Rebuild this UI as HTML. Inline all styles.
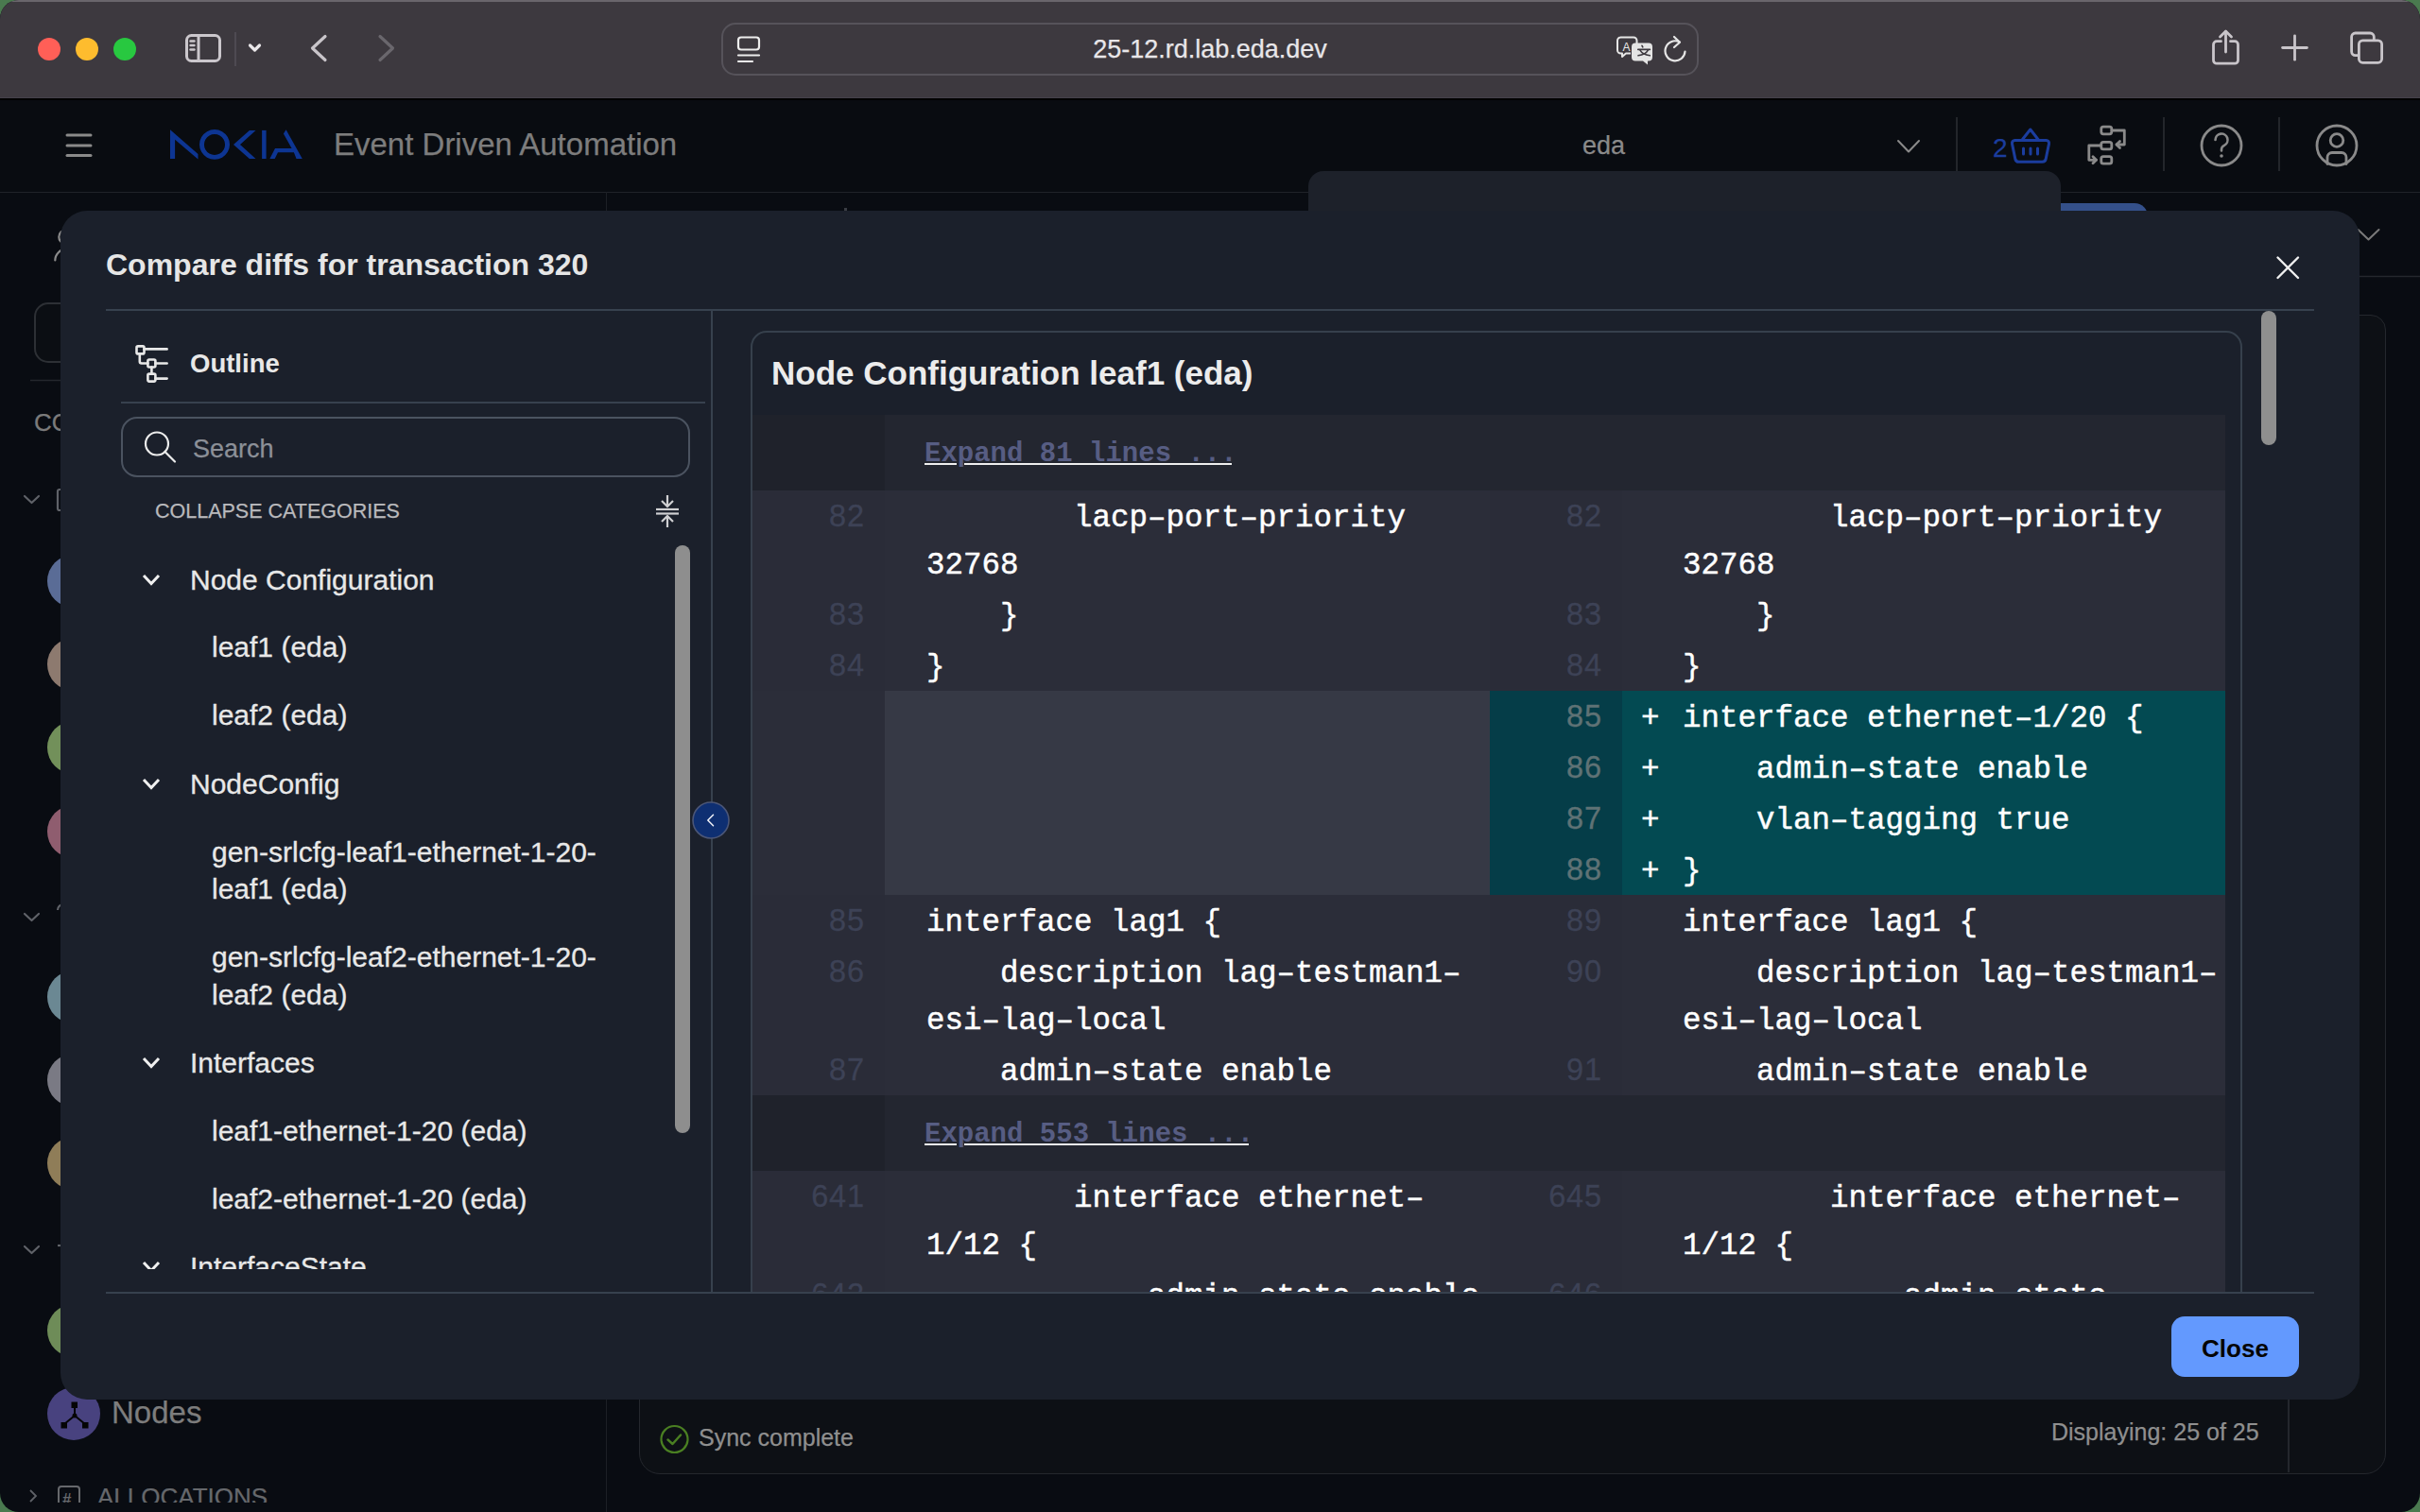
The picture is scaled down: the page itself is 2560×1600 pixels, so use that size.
<!DOCTYPE html>
<html><head><meta charset="utf-8">
<style>
*{box-sizing:border-box;margin:0;padding:0}
html,body{width:2560px;height:1600px;overflow:hidden;background:#4a7a4f;font-family:"Liberation Sans",sans-serif}
#win{position:absolute;left:0;top:0;width:2560px;height:1600px;border-radius:20px;overflow:hidden;background:#090c12}
</style></head><body>
<div id="win">
<div style="position:absolute;left:0px;top:0px;width:2560px;height:104px;background:#3d393f;"></div>
<div style="position:absolute;left:0px;top:0px;width:2560px;height:2px;background:#6a666c;"></div>
<div style="position:absolute;left:39.85px;top:39.85px;width:24.3px;height:24.3px;border-radius:50%;background:#ff5f57"></div>
<div style="position:absolute;left:79.85px;top:39.85px;width:24.3px;height:24.3px;border-radius:50%;background:#febc2e"></div>
<div style="position:absolute;left:119.85px;top:39.85px;width:24.3px;height:24.3px;border-radius:50%;background:#28c840"></div>
<svg style="position:absolute;left:0;top:0" width="2560" height="104">
<g fill="none" stroke="#cbc7cc" stroke-width="3" stroke-linecap="round" stroke-linejoin="round">
<rect x="197.5" y="37.5" width="35" height="27" rx="5"/>
<line x1="210" y1="38" x2="210" y2="64"/>
</g>
<g stroke="#cbc7cc" stroke-width="2.4" stroke-linecap="round"><line x1="201.5" y1="43.5" x2="205.5" y2="43.5"/><line x1="201.5" y1="48" x2="205.5" y2="48"/><line x1="201.5" y1="52.5" x2="205.5" y2="52.5"/></g>
<line x1="249" y1="34" x2="249" y2="70" stroke="#55515a" stroke-width="1.5"/>
<polyline points="264.5,48 269.5,53 274.5,48" fill="none" stroke="#eae7ea" stroke-width="3.2" stroke-linecap="round" stroke-linejoin="round"/>
<polyline points="344,38.5 330.5,51 344,63.5" fill="none" stroke="#c9c5ca" stroke-width="3.2" stroke-linecap="round" stroke-linejoin="round"/>
<polyline points="402,38.5 415.5,51 402,63.5" fill="none" stroke="#6a676d" stroke-width="3.2" stroke-linecap="round" stroke-linejoin="round"/>
<rect x="764" y="25" width="1032" height="54" rx="14" fill="none" stroke="#56535a" stroke-width="2"/>
<g fill="none" stroke="#ededed" stroke-width="2.2" stroke-linecap="round">
<rect x="781" y="39.5" width="22" height="13" rx="3"/>
<line x1="781" y1="58.5" x2="803" y2="58.5"/><line x1="781" y1="65" x2="796" y2="65"/>
</g>
<g fill="none" stroke="#e6e6e6" stroke-width="2" stroke-linejoin="round">
<path d="M1714 39.5 h14 a3.5 3.5 0 0 1 3.5 3.5 v10 M1711 43 a3.5 3.5 0 0 1 3.5-3.5 M1711 43 v10 a3.5 3.5 0 0 0 3.5 3.5 h1.5 v3.5 l4-3.5 h5"/>
<text x="1716.5" y="53.5" font-family="Liberation Sans" font-size="12" fill="#e6e6e6" stroke="none">A</text>
</g>
<path d="M1730 45.5 h14 a4 4 0 0 1 4 4 v11 a4 4 0 0 1 -4 4 h-1 v4 l-5 -4 h-8 a4 4 0 0 1 -4 -4 v-11 a4 4 0 0 1 4 -4z" fill="#e4e4e4"/>
<g fill="none" stroke="#3d393f" stroke-width="1.6" stroke-linecap="round"><path d="M1737 48.3 l0.8 1.6"/><path d="M1732.8 52.4 h12.6"/><path d="M1735 53.2 Q1737.5 57.8 1745.3 58.8"/><path d="M1743.3 53.2 Q1740.8 57.8 1733 58.8"/></g>
<g fill="none" stroke="#e6e6e6" stroke-width="2.2" stroke-linecap="round" stroke-linejoin="round">
<path d="M1782.5 54.5 a10.5 10.5 0 1 1 -6 -10.2"/>
<polyline points="1771,39 1777,44.7 1771,50"/>
</g>
<g fill="none" stroke="#c9c5ca" stroke-width="2.8" stroke-linecap="round" stroke-linejoin="round">
<path d="M2349.5 43.7 h-4.5 a3.5 3.5 0 0 0 -3.5 3.5 v16.5 a3.5 3.5 0 0 0 3.5 3.5 h19 a3.5 3.5 0 0 0 3.5 -3.5 v-16.5 a3.5 3.5 0 0 0 -3.5 -3.5 h-4.5"/>
<line x1="2354.5" y1="33.5" x2="2354.5" y2="55"/>
<polyline points="2348.5,39 2354.5,33 2360.5,39"/>
<line x1="2427.5" y1="37.8" x2="2427.5" y2="63.2"/><line x1="2414.6" y1="50.5" x2="2440.4" y2="50.5"/>
<rect x="2487.6" y="35" width="23.7" height="23.6" rx="4"/>
<rect x="2495.4" y="42.8" width="24.2" height="23.5" rx="4" fill="#3d393f"/>
</g>
</svg>
<div style='position:absolute;left:1280px;top:39.14px;font-family:"Liberation Sans",sans-serif;font-size:27px;line-height:27px;color:#e8e6e9;font-weight:400;white-space:pre;transform:translateX(-50%);-webkit-text-stroke:0.25px #e8e6e9'>25-12.rd.lab.eda.dev</div>
<div style="position:absolute;left:0px;top:104px;width:2560px;height:99px;background:#090c11;"></div>
<div style="position:absolute;left:0px;top:103px;width:2560px;height:1px;background:#45414a;"></div>
<div style="position:absolute;left:0px;top:104px;width:2560px;height:1.5px;background:#000000;"></div>
<div style="position:absolute;left:0px;top:202.5px;width:2560px;height:1.5px;background:#202329;"></div>
<svg style="position:absolute;left:0;top:104px" width="2560" height="99">
<g stroke="#8a8a8a" stroke-width="3" stroke-linecap="round"><line x1="71" y1="39" x2="96" y2="39"/><line x1="71" y1="50" x2="96" y2="50"/><line x1="71" y1="60.5" x2="96" y2="60.5"/></g>
<g fill="#0d3592" transform="translate(0,-104)">
<path d="M180 137.2 L209.5 163 V168.5 L185.1 147.8 V168 H180z"/>
<path d="M227 137 a16 15.9 0 1 0 0.01 0z M227 141.9 a11.05 11 0 1 1 -0.01 0z" fill-rule="evenodd"/>
<path d="M263.9 137.9 H270.5 L254 153.1 L270.5 168 H263.9 L247 153.1z"/>
<rect x="277.1" y="137.9" width="4.5" height="30.1"/>
<path d="M302.6 137.2 L319.8 168 H313.5 L310.9 161.2 H294 L290.7 168 H285.4 L291 157 H308.6 L299.9 141.5z"/>
</g>
<g fill="none" stroke="#8a8a8a" stroke-width="2" stroke-linecap="round" stroke-linejoin="round">
<polyline points="2008,45 2019,56.5 2030,45"/>
</g>
<g stroke="#2c2f34" stroke-width="1.5"><line x1="2070" y1="20" x2="2070" y2="77"/><line x1="2289" y1="20" x2="2289" y2="77"/><line x1="2411" y1="20" x2="2411" y2="77"/></g>
<g fill="none" stroke="#1b3d9e" stroke-width="3" stroke-linecap="round" stroke-linejoin="round" transform="translate(0,-104)">
<path d="M2131.5 148.5 h33 a3 3 0 0 1 3 3.6 l-3.3 16 a4 4 0 0 1 -4 3.2 h-24.4 a4 4 0 0 1 -4 -3.2 l-3.3 -16 a3 3 0 0 1 3 -3.6z"/>
<polyline points="2139.5,147.5 2147.8,137 2156,147.5"/>
<line x1="2140.5" y1="157" x2="2140.5" y2="163"/><line x1="2148" y1="157" x2="2148" y2="163"/><line x1="2155.5" y1="157" x2="2155.5" y2="163"/>
</g>
<g fill="none" stroke="#8a8a8a" stroke-width="2.8" stroke-linejoin="round" stroke-linecap="round">
<g transform="translate(0,-104)">
<rect x="2222.8" y="134.2" width="11" height="7.6" rx="2.2"/>
<rect x="2222.8" y="150.3" width="11" height="7.6" rx="2.2"/>
<rect x="2222.8" y="165.6" width="11" height="7.6" rx="2.2"/>
<polyline points="2234,138 2247.3,138 2247.3,153 2239,153"/><polyline points="2242.5,149.5 2239,153 2242.5,156.5"/>
<polyline points="2222.5,154 2209.8,154 2209.8,169.3 2217.5,169.3"/><polyline points="2214,165.8 2217.5,169.3 2214,172.8"/>
</g>
<circle cx="2350" cy="50" r="21"/>
<circle cx="2472" cy="50" r="21"/>
<circle cx="2472" cy="44.5" r="6.8"/>
<path d="M2462 69.5 v-7 a5 5 0 0 1 5 -5 h10 a5 5 0 0 1 5 5 v7"/>
</g>
<path d="M2343.5 44 a6.5 6.5 0 1 1 9.5 5.8 c-2.2 1.1 -3 2.3 -3 4.2 v1.5" fill="none" stroke="#8a8a8a" stroke-width="2.6" stroke-linecap="round"/>
<circle cx="2350" cy="61" r="1.8" fill="#8a8a8a"/>
</svg>
<div style='position:absolute;left:353px;top:136.07px;font-family:"Liberation Sans",sans-serif;font-size:33px;line-height:33px;color:#7d7d7d;font-weight:400;white-space:pre;;-webkit-text-stroke:0.25px #7d7d7d'>Event Driven Automation</div>
<div style='position:absolute;left:1674px;top:140.64px;font-family:"Liberation Sans",sans-serif;font-size:27px;line-height:27px;color:#8a8a8a;font-weight:400;white-space:pre;;-webkit-text-stroke:0.25px #8a8a8a'>eda</div>
<div style='position:absolute;left:2108px;top:143.30px;font-family:"Liberation Sans",sans-serif;font-size:28px;line-height:28px;color:#1b3d9e;font-weight:400;white-space:pre;;-webkit-text-stroke:0.25px #1b3d9e'>2</div>
<div style="position:absolute;left:640.5px;top:203px;width:1.5px;height:1397px;background:#1c1f25;"></div>
<div style="position:absolute;left:892.5px;top:219.5px;width:3px;height:3.5px;background:#3a3d44;"></div>
<svg style="position:absolute;left:0;top:203px" width="640" height="1397">
<g fill="none" stroke="#8a8a8a" stroke-width="2.2" stroke-linecap="round">
<circle cx="69.5" cy="47.7" r="7.2"/>
<path d="M58.3 72.5 a11.8 11.8 0 0 1 11.8 -11.8"/>
<circle cx="72" cy="147.5" r="8"/>
</g>
<rect x="37" y="118" width="120" height="62" rx="14" fill="#0b0e13" stroke="#2d3035" stroke-width="2"/>
<line x1="32" y1="199.5" x2="640" y2="199.5" stroke="#24272d" stroke-width="1.5"/>
<g fill="none" stroke="#5f6268" stroke-width="2.2" stroke-linecap="round" stroke-linejoin="round">
<polyline points="26,322 33.5,329 41,322"/>
<polyline points="26,764 33.5,771 41,764"/>
<polyline points="26,1116 33.5,1123 41,1116"/>
<rect x="61" y="315" width="14" height="22" rx="2"/>
</g>
<path d="M61 760 a6 6 0 0 1 6 -6" fill="none" stroke="#5f6268" stroke-width="2.2"/>
<path d="M61 1115 h6" fill="none" stroke="#5f6268" stroke-width="2.2"/>
<circle cx="78" cy="412" r="28" fill="#5a6c96"/>
<circle cx="78" cy="500" r="28" fill="#8d7a6f"/>
<circle cx="78" cy="588" r="28" fill="#72905a"/>
<circle cx="78" cy="677" r="28" fill="#8f5d6f"/>
<circle cx="78" cy="852" r="28" fill="#6b8893"/>
<circle cx="78" cy="940" r="28" fill="#7a7a84"/>
<circle cx="78" cy="1028" r="28" fill="#8f7d58"/>
<circle cx="78" cy="1205" r="28" fill="#6e8c58"/>
<circle cx="78" cy="1293" r="28" fill="#48427f"/>
<g stroke="#050505" stroke-width="2" fill="#050505">
<line x1="79" y1="1285" x2="79" y2="1295"/><line x1="79" y1="1295" x2="68" y2="1304"/><line x1="79" y1="1295" x2="90" y2="1304"/>
<rect x="76.5" y="1281.5" width="4.5" height="4.5"/><rect x="65.5" y="1303" width="4.5" height="4.5"/><rect x="88" y="1303" width="4.5" height="4.5"/>
<circle cx="79" cy="1295" r="1.5"/>
</g>
</svg>
<div style='position:absolute;left:36px;top:433.99px;font-family:"Liberation Sans",sans-serif;font-size:26px;line-height:26px;color:#7b7b7b;font-weight:400;white-space:pre;;-webkit-text-stroke:0.25px #7b7b7b'>CO</div>
<div style='position:absolute;left:118px;top:1478.07px;font-family:"Liberation Sans",sans-serif;font-size:33px;line-height:33px;color:#7d7d7d;font-weight:400;white-space:pre;;-webkit-text-stroke:0.25px #7d7d7d'>Nodes</div>
<div style="position:absolute;left:0;top:1500px;width:640px;height:90px;overflow:hidden"><div style='position:absolute;left:103px;top:70.99px;font-family:"Liberation Sans",sans-serif;font-size:26px;line-height:26px;color:#66686c;font-weight:400;white-space:pre;;-webkit-text-stroke:0.25px #66686c'>ALLOCATIONS</div>
<svg style="position:absolute;left:0;top:0" width="100" height="90"><polyline points="32,77 38,83 32,89" fill="none" stroke="#5f6268" stroke-width="1.8"/><rect x="62" y="73" width="22" height="30" rx="3" fill="none" stroke="#66686c" stroke-width="2"/><text x="66" y="92" font-family="Liberation Sans" font-weight="700" font-size="17" fill="#66686c">#</text></svg></div><div style="position:absolute;left:1384px;top:181px;width:796px;height:60px;background:#1d212a;border-radius:16px 16px 0 0"></div>
<div style="position:absolute;left:2180px;top:215px;width:92px;height:20px;background:#34508a;border-radius:0 14px 0 0"></div>
<svg style="position:absolute;left:2400px;top:203px" width="160" height="400">
<polyline points="94.5,40 105.5,50.5 116.5,40" fill="none" stroke="#7a7a7a" stroke-width="2" stroke-linecap="round" stroke-linejoin="round"/>
<line x1="90" y1="89.5" x2="160" y2="89.5" stroke="#24272d" stroke-width="1.5"/>
</svg>
<div style="position:absolute;left:676px;top:333px;width:1848px;height:1226.5px;background:#0d1015;border:1.5px solid #24272d;border-radius:16px 16px 22px 22px"></div>
<div style="position:absolute;left:2420px;top:1480px;width:1.5px;height:78px;background:#24272d;"></div>
<svg style="position:absolute;left:690px;top:1500px" width="60" height="50">
<circle cx="23.5" cy="23" r="14" fill="none" stroke="#4a7f22" stroke-width="2.2"/>
<polyline points="16.5,23.5 21.5,28 30,18.5" fill="none" stroke="#4a7f22" stroke-width="2.4" stroke-linecap="round" stroke-linejoin="round"/>
</svg>
<div style='position:absolute;left:739px;top:1508.84px;font-family:"Liberation Sans",sans-serif;font-size:25px;line-height:25px;color:#8f8f8f;font-weight:400;white-space:pre;;-webkit-text-stroke:0.25px #8f8f8f'>Sync complete</div>
<div style='position:absolute;left:2170px;top:1502.84px;font-family:"Liberation Sans",sans-serif;font-size:25px;line-height:25px;color:#8f8f8f;font-weight:400;white-space:pre;;-webkit-text-stroke:0.25px #8f8f8f'>Displaying: 25 of 25</div>
<div style="position:absolute;left:64px;top:223px;width:2432px;height:1258px;background:#1b202b;border-radius:28px"></div>
<div style='position:absolute;left:112px;top:263.91px;font-family:"Liberation Sans",sans-serif;font-size:32px;line-height:32px;color:#e6e6e6;font-weight:700;white-space:pre;'>Compare diffs for transaction 320</div>
<svg style="position:absolute;left:2400px;top:263px" width="40" height="40">
<g stroke="#f0f0f0" stroke-width="2.4" stroke-linecap="round"><line x1="9.5" y1="9.5" x2="31" y2="31"/><line x1="31" y1="9.5" x2="9.5" y2="31"/></g>
</svg>
<div style="position:absolute;left:112px;top:327px;width:2336px;height:2px;background:#37414e;"></div>
<div style="position:absolute;left:112px;top:1367px;width:2336px;height:2px;background:#37414e;"></div>
<div style="position:absolute;left:752px;top:329px;width:2px;height:1038px;background:#37414e;"></div>
<div style="position:absolute;left:2297px;top:1393px;width:135px;height:64px;background:#6399fe;border-radius:14px"></div>
<div style='position:absolute;left:2364.5px;top:1413.99px;font-family:"Liberation Sans",sans-serif;font-size:26px;line-height:26px;color:#050505;font-weight:700;white-space:pre;transform:translateX(-50%)'>Close</div>
<div style="position:absolute;left:112px;top:329px;width:639px;height:1038px;overflow:hidden">
<svg style="position:absolute;left:0;top:0" width="640" height="1038">
<g fill="none" stroke="#e8e8e8" stroke-width="2.6" stroke-linecap="round" stroke-linejoin="round">
<rect x="32.5" y="37.4" width="8" height="8" rx="1.5"/>
<rect x="44.4" y="51.5" width="8" height="8" rx="1.5"/>
<rect x="44.4" y="66.6" width="8" height="8" rx="1.5"/>
<line x1="40.5" y1="40.4" x2="64.6" y2="40.4"/>
<path d="M35.8 45.4 V53.5 a2 2 0 0 0 2 2 H44.4"/>
<line x1="52.4" y1="55.5" x2="64.6" y2="55.5"/>
<line x1="48.4" y1="59.5" x2="48.4" y2="66.6"/>
<line x1="52.4" y1="71.6" x2="64.6" y2="71.6"/>
</g>
<line x1="16" y1="97" x2="634" y2="97" stroke="#37414e" stroke-width="2"/>
<rect x="17" y="113" width="600" height="62" rx="16" fill="none" stroke="#4b5360" stroke-width="2"/>
<g fill="none" stroke="#ececec" stroke-width="2.2" stroke-linecap="round">
<circle cx="54" cy="140.5" r="12"/><line x1="62.5" y1="149" x2="73" y2="159.5"/>
</g>
<g fill="none" stroke="#d0d0d3" stroke-width="2.2" stroke-linecap="butt" stroke-linejoin="miter">
<line x1="594" y1="195" x2="594" y2="207"/><polyline points="588,201 594,207 600,201"/>
<line x1="582" y1="210" x2="606" y2="210"/><line x1="582" y1="214.5" x2="606" y2="214.5"/>
<line x1="594" y1="217" x2="594" y2="229"/><polyline points="588,223 594,217 600,223"/>
</g>
<rect x="602" y="248" width="16" height="622" rx="8" fill="#8e8e8e"/>
</svg>
<div style='position:absolute;left:89px;top:42.22px;font-family:"Liberation Sans",sans-serif;font-size:27.5px;line-height:27.5px;color:#e8e8e8;font-weight:700;white-space:pre;'>Outline</div>
<div style='position:absolute;left:92px;top:133.14px;font-family:"Liberation Sans",sans-serif;font-size:27px;line-height:27px;color:#8c9098;font-weight:400;white-space:pre;;-webkit-text-stroke:0.25px #8c9098'>Search</div>
<div style='position:absolute;left:52px;top:201.80px;font-family:"Liberation Sans",sans-serif;font-size:21.5px;line-height:21.5px;color:#b9b9bc;font-weight:400;white-space:pre;;-webkit-text-stroke:0.25px #b9b9bc'>COLLAPSE CATEGORIES</div>
<div style="position:absolute;left:0;top:241px;width:600px;height:773px;overflow:hidden"><div style='position:absolute;left:89px;top:28.61px;font-family:"Liberation Sans",sans-serif;font-size:30px;line-height:30px;color:#e8e8e8;font-weight:400;white-space:pre;-webkit-text-stroke:0.3px #e8e8e8'>Node Configuration</div>
<div style='position:absolute;left:112px;top:99.61px;font-family:"Liberation Sans",sans-serif;font-size:30px;line-height:30px;color:#e8e8e8;font-weight:400;white-space:pre;-webkit-text-stroke:0.3px #e8e8e8'>leaf1 (eda)</div>
<div style='position:absolute;left:112px;top:171.60px;font-family:"Liberation Sans",sans-serif;font-size:30px;line-height:30px;color:#e8e8e8;font-weight:400;white-space:pre;-webkit-text-stroke:0.3px #e8e8e8'>leaf2 (eda)</div>
<div style='position:absolute;left:89px;top:244.60px;font-family:"Liberation Sans",sans-serif;font-size:30px;line-height:30px;color:#e8e8e8;font-weight:400;white-space:pre;-webkit-text-stroke:0.3px #e8e8e8'>NodeConfig</div>
<div style='position:absolute;left:112px;top:316.61px;font-family:"Liberation Sans",sans-serif;font-size:30px;line-height:30px;color:#e8e8e8;font-weight:400;white-space:pre;-webkit-text-stroke:0.3px #e8e8e8'>gen-srlcfg-leaf1-ethernet-1-20-</div>
<div style='position:absolute;left:112px;top:355.61px;font-family:"Liberation Sans",sans-serif;font-size:30px;line-height:30px;color:#e8e8e8;font-weight:400;white-space:pre;-webkit-text-stroke:0.3px #e8e8e8'>leaf1 (eda)</div>
<div style='position:absolute;left:112px;top:427.61px;font-family:"Liberation Sans",sans-serif;font-size:30px;line-height:30px;color:#e8e8e8;font-weight:400;white-space:pre;-webkit-text-stroke:0.3px #e8e8e8'>gen-srlcfg-leaf2-ethernet-1-20-</div>
<div style='position:absolute;left:112px;top:467.61px;font-family:"Liberation Sans",sans-serif;font-size:30px;line-height:30px;color:#e8e8e8;font-weight:400;white-space:pre;-webkit-text-stroke:0.3px #e8e8e8'>leaf2 (eda)</div>
<div style='position:absolute;left:89px;top:539.61px;font-family:"Liberation Sans",sans-serif;font-size:30px;line-height:30px;color:#e8e8e8;font-weight:400;white-space:pre;-webkit-text-stroke:0.3px #e8e8e8'>Interfaces</div>
<div style='position:absolute;left:112px;top:611.61px;font-family:"Liberation Sans",sans-serif;font-size:30px;line-height:30px;color:#e8e8e8;font-weight:400;white-space:pre;-webkit-text-stroke:0.3px #e8e8e8'>leaf1-ethernet-1-20 (eda)</div>
<div style='position:absolute;left:112px;top:683.61px;font-family:"Liberation Sans",sans-serif;font-size:30px;line-height:30px;color:#e8e8e8;font-weight:400;white-space:pre;-webkit-text-stroke:0.3px #e8e8e8'>leaf2-ethernet-1-20 (eda)</div>
<div style='position:absolute;left:89px;top:755.61px;font-family:"Liberation Sans",sans-serif;font-size:30px;line-height:30px;color:#e8e8e8;font-weight:400;white-space:pre;-webkit-text-stroke:0.3px #e8e8e8'>InterfaceState</div>
<svg style="position:absolute;left:0;top:0" width="640" height="800"><g fill="none" stroke="#f0f0f0" stroke-width="3" stroke-linecap="butt" stroke-linejoin="miter"><polyline points="40,39 48,47.5 56,39"/><polyline points="40,255 48,263.5 56,255"/><polyline points="40,550 48,558.5 56,550"/><polyline points="40,766 48,774.5 56,766"/></g></svg></div></div>
<svg style="position:absolute;left:728px;top:844px" width="48" height="48">
<circle cx="24" cy="24" r="19" fill="#0e2f72" stroke="#4b5677" stroke-width="1.6"/>
<polyline points="26.5,18.2 20.8,24 26.5,29.8" fill="none" stroke="#f0f2f8" stroke-width="1.5" stroke-linecap="round" stroke-linejoin="round"/>
</svg>
<div style="position:absolute;left:753px;top:329px;width:1695px;height:1038px;overflow:hidden">
<div style="position:absolute;left:41px;top:21px;width:1578px;height:1200px;background:#1b202b;border:2px solid #36404c;border-radius:17px"></div>
<div style='position:absolute;left:63px;top:48.37px;font-family:"Liberation Sans",sans-serif;font-size:35px;line-height:35px;color:#ececec;font-weight:700;white-space:pre;'>Node Configuration leaf1 (eda)</div>
<div style="position:absolute;left:43px;top:110px;width:140px;height:80px;background:#1f222b;"></div>
<div style="position:absolute;left:183px;top:110px;width:1418px;height:80px;background:#232630;"></div>
<div style='position:absolute;left:225px;top:136.78px;font-family:"Liberation Mono",monospace;font-size:29px;line-height:29px;color:#575d83;font-weight:700;white-space:pre;'>Expand 81 lines ...</div>
<div style="position:absolute;left:225px;top:160.5px;width:34px;height:2.5px;background:#eeeeee;"></div>
<div style="position:absolute;left:267px;top:160.5px;width:283px;height:2.5px;background:#eeeeee;"></div>
<div style="position:absolute;left:43px;top:190px;width:1558px;height:104px;background:#2b2d39;"></div>
<div style="position:absolute;left:43px;top:190px;width:140px;height:104px;background:#2a2c38;"></div>
<div style="position:absolute;left:823px;top:190px;width:140px;height:104px;background:#2a2c38;"></div>
<div style='position:absolute;left:-38.2px;width:200px;text-align:right;top:200.59px;font-family:"Liberation Sans",sans-serif;font-size:32.5px;line-height:32.5px;letter-spacing:0.8px;-webkit-text-stroke:0.3px #3d4256;color:#3d4256'>82</div>
<div style='position:absolute;left:741.8px;width:200px;text-align:right;top:200.59px;font-family:"Liberation Sans",sans-serif;font-size:32.5px;line-height:32.5px;letter-spacing:0.8px;-webkit-text-stroke:0.3px #3d4256;color:#3d4256'>82</div>
<div style='position:absolute;left:227px;top:203.75px;font-family:"Liberation Mono",monospace;font-size:32.5px;line-height:32.5px;color:#ffffff;font-weight:400;white-space:pre;-webkit-text-stroke:0.45px #ffffff'>        lacp–port–priority</div>
<div style='position:absolute;left:227px;top:253.75px;font-family:"Liberation Mono",monospace;font-size:32.5px;line-height:32.5px;color:#ffffff;font-weight:400;white-space:pre;-webkit-text-stroke:0.45px #ffffff'>32768</div>
<div style='position:absolute;left:1027px;top:203.75px;font-family:"Liberation Mono",monospace;font-size:32.5px;line-height:32.5px;color:#ffffff;font-weight:400;white-space:pre;-webkit-text-stroke:0.45px #ffffff'>        lacp–port–priority</div>
<div style='position:absolute;left:1027px;top:253.75px;font-family:"Liberation Mono",monospace;font-size:32.5px;line-height:32.5px;color:#ffffff;font-weight:400;white-space:pre;-webkit-text-stroke:0.45px #ffffff'>32768</div>
<div style="position:absolute;left:43px;top:294px;width:1558px;height:54px;background:#2b2d39;"></div>
<div style="position:absolute;left:43px;top:294px;width:140px;height:54px;background:#2a2c38;"></div>
<div style="position:absolute;left:823px;top:294px;width:140px;height:54px;background:#2a2c38;"></div>
<div style='position:absolute;left:-38.2px;width:200px;text-align:right;top:304.59px;font-family:"Liberation Sans",sans-serif;font-size:32.5px;line-height:32.5px;letter-spacing:0.8px;-webkit-text-stroke:0.3px #3d4256;color:#3d4256'>83</div>
<div style='position:absolute;left:741.8px;width:200px;text-align:right;top:304.59px;font-family:"Liberation Sans",sans-serif;font-size:32.5px;line-height:32.5px;letter-spacing:0.8px;-webkit-text-stroke:0.3px #3d4256;color:#3d4256'>83</div>
<div style='position:absolute;left:227px;top:307.75px;font-family:"Liberation Mono",monospace;font-size:32.5px;line-height:32.5px;color:#ffffff;font-weight:400;white-space:pre;-webkit-text-stroke:0.45px #ffffff'>    }</div>
<div style='position:absolute;left:1027px;top:307.75px;font-family:"Liberation Mono",monospace;font-size:32.5px;line-height:32.5px;color:#ffffff;font-weight:400;white-space:pre;-webkit-text-stroke:0.45px #ffffff'>    }</div>
<div style="position:absolute;left:43px;top:348px;width:1558px;height:54px;background:#2b2d39;"></div>
<div style="position:absolute;left:43px;top:348px;width:140px;height:54px;background:#2a2c38;"></div>
<div style="position:absolute;left:823px;top:348px;width:140px;height:54px;background:#2a2c38;"></div>
<div style='position:absolute;left:-38.2px;width:200px;text-align:right;top:358.59px;font-family:"Liberation Sans",sans-serif;font-size:32.5px;line-height:32.5px;letter-spacing:0.8px;-webkit-text-stroke:0.3px #3d4256;color:#3d4256'>84</div>
<div style='position:absolute;left:741.8px;width:200px;text-align:right;top:358.59px;font-family:"Liberation Sans",sans-serif;font-size:32.5px;line-height:32.5px;letter-spacing:0.8px;-webkit-text-stroke:0.3px #3d4256;color:#3d4256'>84</div>
<div style='position:absolute;left:227px;top:361.75px;font-family:"Liberation Mono",monospace;font-size:32.5px;line-height:32.5px;color:#ffffff;font-weight:400;white-space:pre;-webkit-text-stroke:0.45px #ffffff'>}</div>
<div style='position:absolute;left:1027px;top:361.75px;font-family:"Liberation Mono",monospace;font-size:32.5px;line-height:32.5px;color:#ffffff;font-weight:400;white-space:pre;-webkit-text-stroke:0.45px #ffffff'>}</div>
<div style="position:absolute;left:43px;top:402px;width:140px;height:216px;background:#2b2d39;"></div>
<div style="position:absolute;left:183px;top:402px;width:640px;height:216px;background:#363945;"></div>
<div style="position:absolute;left:823px;top:402px;width:140px;height:216px;background:#053d48;"></div>
<div style="position:absolute;left:963px;top:402px;width:638px;height:216px;background:#034a52;"></div>
<div style='position:absolute;left:741.8px;width:200px;text-align:right;top:412.59px;font-family:"Liberation Sans",sans-serif;font-size:32.5px;line-height:32.5px;letter-spacing:0.8px;-webkit-text-stroke:0.3px #5f7275;color:#5f7275'>85</div>
<div style='position:absolute;left:983px;top:415.75px;font-family:"Liberation Mono",monospace;font-size:32.5px;line-height:32.5px;color:#ffffff;font-weight:400;white-space:pre;-webkit-text-stroke:0.45px #ffffff'>+</div>
<div style='position:absolute;left:1027px;top:415.75px;font-family:"Liberation Mono",monospace;font-size:32.5px;line-height:32.5px;color:#ffffff;font-weight:400;white-space:pre;-webkit-text-stroke:0.45px #ffffff'>interface ethernet–1/20 {</div>
<div style='position:absolute;left:741.8px;width:200px;text-align:right;top:466.59px;font-family:"Liberation Sans",sans-serif;font-size:32.5px;line-height:32.5px;letter-spacing:0.8px;-webkit-text-stroke:0.3px #5f7275;color:#5f7275'>86</div>
<div style='position:absolute;left:983px;top:469.75px;font-family:"Liberation Mono",monospace;font-size:32.5px;line-height:32.5px;color:#ffffff;font-weight:400;white-space:pre;-webkit-text-stroke:0.45px #ffffff'>+</div>
<div style='position:absolute;left:1027px;top:469.75px;font-family:"Liberation Mono",monospace;font-size:32.5px;line-height:32.5px;color:#ffffff;font-weight:400;white-space:pre;-webkit-text-stroke:0.45px #ffffff'>    admin–state enable</div>
<div style='position:absolute;left:741.8px;width:200px;text-align:right;top:520.59px;font-family:"Liberation Sans",sans-serif;font-size:32.5px;line-height:32.5px;letter-spacing:0.8px;-webkit-text-stroke:0.3px #5f7275;color:#5f7275'>87</div>
<div style='position:absolute;left:983px;top:523.75px;font-family:"Liberation Mono",monospace;font-size:32.5px;line-height:32.5px;color:#ffffff;font-weight:400;white-space:pre;-webkit-text-stroke:0.45px #ffffff'>+</div>
<div style='position:absolute;left:1027px;top:523.75px;font-family:"Liberation Mono",monospace;font-size:32.5px;line-height:32.5px;color:#ffffff;font-weight:400;white-space:pre;-webkit-text-stroke:0.45px #ffffff'>    vlan–tagging true</div>
<div style='position:absolute;left:741.8px;width:200px;text-align:right;top:574.59px;font-family:"Liberation Sans",sans-serif;font-size:32.5px;line-height:32.5px;letter-spacing:0.8px;-webkit-text-stroke:0.3px #5f7275;color:#5f7275'>88</div>
<div style='position:absolute;left:983px;top:577.75px;font-family:"Liberation Mono",monospace;font-size:32.5px;line-height:32.5px;color:#ffffff;font-weight:400;white-space:pre;-webkit-text-stroke:0.45px #ffffff'>+</div>
<div style='position:absolute;left:1027px;top:577.75px;font-family:"Liberation Mono",monospace;font-size:32.5px;line-height:32.5px;color:#ffffff;font-weight:400;white-space:pre;-webkit-text-stroke:0.45px #ffffff'>}</div>
<div style="position:absolute;left:43px;top:618px;width:1558px;height:54px;background:#2b2d39;"></div>
<div style="position:absolute;left:43px;top:618px;width:140px;height:54px;background:#2a2c38;"></div>
<div style="position:absolute;left:823px;top:618px;width:140px;height:54px;background:#2a2c38;"></div>
<div style='position:absolute;left:-38.2px;width:200px;text-align:right;top:628.59px;font-family:"Liberation Sans",sans-serif;font-size:32.5px;line-height:32.5px;letter-spacing:0.8px;-webkit-text-stroke:0.3px #3d4256;color:#3d4256'>85</div>
<div style='position:absolute;left:741.8px;width:200px;text-align:right;top:628.59px;font-family:"Liberation Sans",sans-serif;font-size:32.5px;line-height:32.5px;letter-spacing:0.8px;-webkit-text-stroke:0.3px #3d4256;color:#3d4256'>89</div>
<div style='position:absolute;left:227px;top:631.75px;font-family:"Liberation Mono",monospace;font-size:32.5px;line-height:32.5px;color:#ffffff;font-weight:400;white-space:pre;-webkit-text-stroke:0.45px #ffffff'>interface lag1 {</div>
<div style='position:absolute;left:1027px;top:631.75px;font-family:"Liberation Mono",monospace;font-size:32.5px;line-height:32.5px;color:#ffffff;font-weight:400;white-space:pre;-webkit-text-stroke:0.45px #ffffff'>interface lag1 {</div>
<div style="position:absolute;left:43px;top:672px;width:1558px;height:104px;background:#2b2d39;"></div>
<div style="position:absolute;left:43px;top:672px;width:140px;height:104px;background:#2a2c38;"></div>
<div style="position:absolute;left:823px;top:672px;width:140px;height:104px;background:#2a2c38;"></div>
<div style='position:absolute;left:-38.2px;width:200px;text-align:right;top:682.59px;font-family:"Liberation Sans",sans-serif;font-size:32.5px;line-height:32.5px;letter-spacing:0.8px;-webkit-text-stroke:0.3px #3d4256;color:#3d4256'>86</div>
<div style='position:absolute;left:741.8px;width:200px;text-align:right;top:682.59px;font-family:"Liberation Sans",sans-serif;font-size:32.5px;line-height:32.5px;letter-spacing:0.8px;-webkit-text-stroke:0.3px #3d4256;color:#3d4256'>90</div>
<div style='position:absolute;left:227px;top:685.75px;font-family:"Liberation Mono",monospace;font-size:32.5px;line-height:32.5px;color:#ffffff;font-weight:400;white-space:pre;-webkit-text-stroke:0.45px #ffffff'>    description lag–testman1–</div>
<div style='position:absolute;left:227px;top:735.75px;font-family:"Liberation Mono",monospace;font-size:32.5px;line-height:32.5px;color:#ffffff;font-weight:400;white-space:pre;-webkit-text-stroke:0.45px #ffffff'>esi–lag–local</div>
<div style='position:absolute;left:1027px;top:685.75px;font-family:"Liberation Mono",monospace;font-size:32.5px;line-height:32.5px;color:#ffffff;font-weight:400;white-space:pre;-webkit-text-stroke:0.45px #ffffff'>    description lag–testman1–</div>
<div style='position:absolute;left:1027px;top:735.75px;font-family:"Liberation Mono",monospace;font-size:32.5px;line-height:32.5px;color:#ffffff;font-weight:400;white-space:pre;-webkit-text-stroke:0.45px #ffffff'>esi–lag–local</div>
<div style="position:absolute;left:43px;top:776px;width:1558px;height:54px;background:#2b2d39;"></div>
<div style="position:absolute;left:43px;top:776px;width:140px;height:54px;background:#2a2c38;"></div>
<div style="position:absolute;left:823px;top:776px;width:140px;height:54px;background:#2a2c38;"></div>
<div style='position:absolute;left:-38.2px;width:200px;text-align:right;top:786.59px;font-family:"Liberation Sans",sans-serif;font-size:32.5px;line-height:32.5px;letter-spacing:0.8px;-webkit-text-stroke:0.3px #3d4256;color:#3d4256'>87</div>
<div style='position:absolute;left:741.8px;width:200px;text-align:right;top:786.59px;font-family:"Liberation Sans",sans-serif;font-size:32.5px;line-height:32.5px;letter-spacing:0.8px;-webkit-text-stroke:0.3px #3d4256;color:#3d4256'>91</div>
<div style='position:absolute;left:227px;top:789.75px;font-family:"Liberation Mono",monospace;font-size:32.5px;line-height:32.5px;color:#ffffff;font-weight:400;white-space:pre;-webkit-text-stroke:0.45px #ffffff'>    admin–state enable</div>
<div style='position:absolute;left:1027px;top:789.75px;font-family:"Liberation Mono",monospace;font-size:32.5px;line-height:32.5px;color:#ffffff;font-weight:400;white-space:pre;-webkit-text-stroke:0.45px #ffffff'>    admin–state enable</div>
<div style="position:absolute;left:43px;top:830px;width:140px;height:80px;background:#1f222b;"></div>
<div style="position:absolute;left:183px;top:830px;width:1418px;height:80px;background:#232630;"></div>
<div style='position:absolute;left:225px;top:856.78px;font-family:"Liberation Mono",monospace;font-size:29px;line-height:29px;color:#575d83;font-weight:700;white-space:pre;'>Expand 553 lines ...</div>
<div style="position:absolute;left:225px;top:880.5px;width:34px;height:2.5px;background:#eeeeee;"></div>
<div style="position:absolute;left:267px;top:880.5px;width:301px;height:2.5px;background:#eeeeee;"></div>
<div style="position:absolute;left:43px;top:910px;width:1558px;height:104px;background:#2b2d39;"></div>
<div style="position:absolute;left:43px;top:910px;width:140px;height:104px;background:#2a2c38;"></div>
<div style="position:absolute;left:823px;top:910px;width:140px;height:104px;background:#2a2c38;"></div>
<div style='position:absolute;left:-38.2px;width:200px;text-align:right;top:920.59px;font-family:"Liberation Sans",sans-serif;font-size:32.5px;line-height:32.5px;letter-spacing:0.8px;-webkit-text-stroke:0.3px #3d4256;color:#3d4256'>641</div>
<div style='position:absolute;left:741.8px;width:200px;text-align:right;top:920.59px;font-family:"Liberation Sans",sans-serif;font-size:32.5px;line-height:32.5px;letter-spacing:0.8px;-webkit-text-stroke:0.3px #3d4256;color:#3d4256'>645</div>
<div style='position:absolute;left:227px;top:923.75px;font-family:"Liberation Mono",monospace;font-size:32.5px;line-height:32.5px;color:#ffffff;font-weight:400;white-space:pre;-webkit-text-stroke:0.45px #ffffff'>        interface ethernet–</div>
<div style='position:absolute;left:227px;top:973.75px;font-family:"Liberation Mono",monospace;font-size:32.5px;line-height:32.5px;color:#ffffff;font-weight:400;white-space:pre;-webkit-text-stroke:0.45px #ffffff'>1/12 {</div>
<div style='position:absolute;left:1027px;top:923.75px;font-family:"Liberation Mono",monospace;font-size:32.5px;line-height:32.5px;color:#ffffff;font-weight:400;white-space:pre;-webkit-text-stroke:0.45px #ffffff'>        interface ethernet–</div>
<div style='position:absolute;left:1027px;top:973.75px;font-family:"Liberation Mono",monospace;font-size:32.5px;line-height:32.5px;color:#ffffff;font-weight:400;white-space:pre;-webkit-text-stroke:0.45px #ffffff'>1/12 {</div>
<div style="position:absolute;left:43px;top:1014px;width:1558px;height:104px;background:#2b2d39;"></div>
<div style="position:absolute;left:43px;top:1014px;width:140px;height:104px;background:#2a2c38;"></div>
<div style="position:absolute;left:823px;top:1014px;width:140px;height:104px;background:#2a2c38;"></div>
<div style='position:absolute;left:-38.2px;width:200px;text-align:right;top:1024.59px;font-family:"Liberation Sans",sans-serif;font-size:32.5px;line-height:32.5px;letter-spacing:0.8px;-webkit-text-stroke:0.3px #3d4256;color:#3d4256'>642</div>
<div style='position:absolute;left:741.8px;width:200px;text-align:right;top:1024.59px;font-family:"Liberation Sans",sans-serif;font-size:32.5px;line-height:32.5px;letter-spacing:0.8px;-webkit-text-stroke:0.3px #3d4256;color:#3d4256'>646</div>
<div style='position:absolute;left:227px;top:1027.75px;font-family:"Liberation Mono",monospace;font-size:32.5px;line-height:32.5px;color:#ffffff;font-weight:400;white-space:pre;-webkit-text-stroke:0.45px #ffffff'>            admin–state enable</div>
<div style='position:absolute;left:1027px;top:1027.75px;font-family:"Liberation Mono",monospace;font-size:32.5px;line-height:32.5px;color:#ffffff;font-weight:400;white-space:pre;-webkit-text-stroke:0.45px #ffffff'>            admin–state</div>
<div style='position:absolute;left:1027px;top:1077.75px;font-family:"Liberation Mono",monospace;font-size:32.5px;line-height:32.5px;color:#ffffff;font-weight:400;white-space:pre;-webkit-text-stroke:0.45px #ffffff'>enable</div>
<div style="position:absolute;left:1639px;top:0px;width:16px;height:142px;background:#8f8f8f;border-radius:8px"></div>
</div>
</div>
</body></html>
